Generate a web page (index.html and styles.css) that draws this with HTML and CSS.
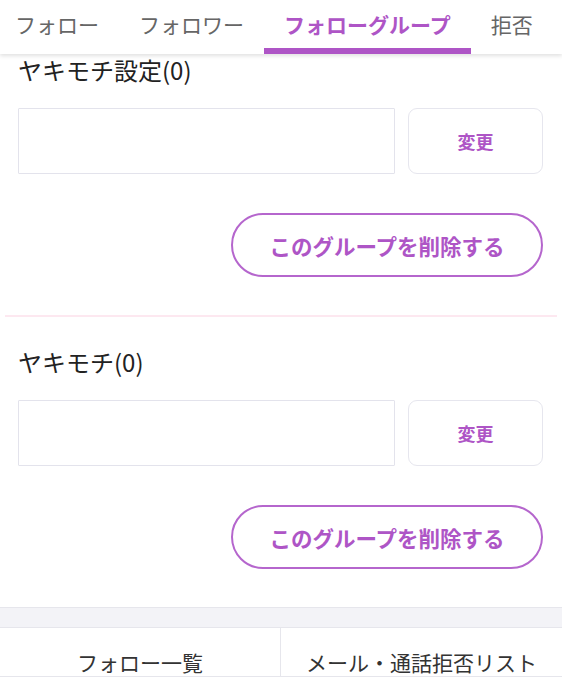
FILE: index.html
```html
<!DOCTYPE html>
<html lang="ja">
<head>
<meta charset="utf-8">
<title>フォローグループ</title>
<link rel="stylesheet" href="styles.css">
</head>
<body>
<nav class="tabs">
  <ul class="tab-list">
    <li class="tab">フォロー</li>
    <li class="tab">フォロワー</li>
    <li class="tab tab-active">フォローグループ</li>
    <li class="tab">拒否</li>
  </ul>
</nav>
<main class="groups">
  <section class="group">
    <h2 class="group-title">ヤキモチ設定(0)</h2>
    <div class="rename-row">
      <input class="rename-input" type="text">
      <button class="rename-btn">変更</button>
    </div>
    <div class="delete-row">
      <button class="delete-btn">このグループを削除する</button>
    </div>
  </section>
  <section class="group">
    <h2 class="group-title">ヤキモチ(0)</h2>
    <div class="rename-row">
      <input class="rename-input" type="text">
      <button class="rename-btn">変更</button>
    </div>
    <div class="delete-row">
      <button class="delete-btn">このグループを削除する</button>
    </div>
  </section>
</main>
<div class="band"></div>
<footer class="links">
  <a class="link-cell">フォロー一覧</a>
  <a class="link-cell">メール・通話拒否リスト</a>
</footer>
</body>
</html>
```
FILE: styles.css
```css
* { box-sizing: border-box; }
html, body { margin: 0; padding: 0; background: #fff; }
body {
  font-family: "Noto Sans CJK JP", "Noto Sans", sans-serif;
  color: #222;
  width: 562px;
  height: 677px;
  overflow: hidden;
}
.tabs {
  position: relative;
  z-index: 2;
  height: 54px;
  background: #fff;
  box-shadow: 0 2px 4px rgba(0,0,0,0.12);
  overflow: hidden;
}
.tab-list {
  list-style: none;
  margin: 0 0 0 -5px;
  padding: 0;
  display: flex;
  height: 54px;
  white-space: nowrap;
}
.tab {
  padding: 8px 20px 0;
  font-size: 21px;
  line-height: 32px;
  color: #666;
  height: 54px;
}
.tab-active {
  color: #ae55c6;
  font-weight: 700;
  border-bottom: 6px solid #ae55c6;
}
.groups {
  margin-top: -29px;
}
.group {
  margin: 0 5px;
  padding: 29px 14px 38px 13px;
  border-bottom: 2px solid #fde8f0;
}
.group:last-child { border-bottom: none; }
.group-title {
  margin: 0;
  font-size: 24px;
  font-weight: 400;
  line-height: 32px;
  color: #222;
}
.rename-row {
  display: flex;
  gap: 13px;
  margin-top: 22px;
  height: 66px;
}
.rename-input {
  flex: 1;
  height: 66px;
  border: 1.5px solid #e3e3ec;
  border-radius: 1px;
  background: #fff;
  margin: 0;
}
.rename-btn {
  width: 135px;
  height: 66px;
  border: 1.5px solid #e6e6ee;
  border-radius: 9px;
  background: #fff;
  color: #ae55c6;
  font-family: inherit;
  font-size: 18px;
  font-weight: 700;
  padding: 0;
}
.delete-row {
  display: flex;
  justify-content: flex-end;
  margin-top: 39px;
}
.delete-btn {
  width: 312px;
  height: 64px;
  border: 2px solid #b566cd;
  border-radius: 32px;
  background: #fff;
  color: #ae55c6;
  font-family: inherit;
  font-size: 21.5px;
  font-weight: 700;
  padding: 0;
}
.band {
  height: 21px;
  background: #f3f3f7;
  border-top: 1px solid #e6e6ec;
  border-bottom: 1px solid #e6e6ec;
}
.links {
  display: grid;
  grid-template-columns: 280px 1fr;
}
.link-cell {
  display: block;
  text-align: center;
  padding-top: 20px;
  font-size: 21px;
  line-height: 28px;
  color: #333;
  border-bottom: 1px solid #e6e6ec;
}
.link-cell + .link-cell {
  border-left: 1px solid #e6e6ec;
}
```
